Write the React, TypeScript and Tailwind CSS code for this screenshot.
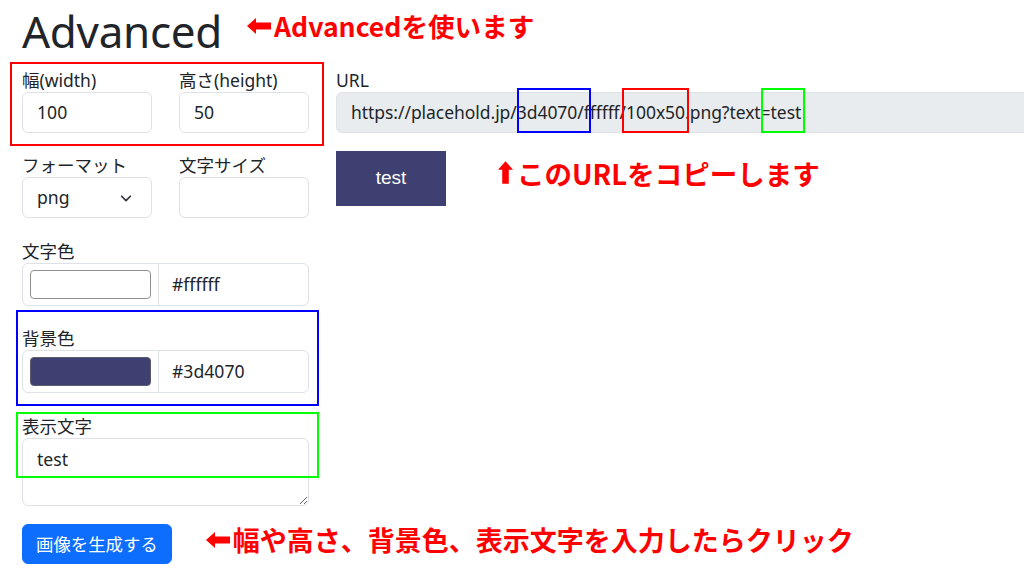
import React from "react";

const font = { fontFamily: '"Noto Sans", "Noto Sans CJK JP", sans-serif' };
const noteFont = { fontFamily: '"Noto Sans CJK JP", sans-serif' };

function LeftArrow({ className }: { className?: string }) {
  return (
    <svg viewBox="0 0 24 16" className={className} fill="#ff0000">
      <path d="M0 8 L9 0 L9 4.5 L24 4.5 L24 11.5 L9 11.5 L9 16 Z" />
    </svg>
  );
}

function UpArrow({ className }: { className?: string }) {
  return (
    <svg viewBox="0 0 16 24" className={className} fill="#ff0000">
      <path d="M8 0 L16 9 L11.5 9 L11.5 24 L4.5 24 L4.5 9 L0 9 Z" />
    </svg>
  );
}

function Label({ children }: { children: React.ReactNode }) {
  return <div className="text-[17.5px] leading-[20px] mb-[2px] text-[#212529]">{children}</div>;
}

function TextInput({ value }: { value: string }) {
  return (
    <div className="h-[41px] border border-[#dee2e6] rounded-[6px] bg-white flex items-center px-[14px] text-[17.6px] text-[#212529]">
      {value}
    </div>
  );
}

function ColorGroup({ swatch, value, light }: { swatch: string; value: string; light?: boolean }) {
  return (
    <div className="h-[43px] flex border border-[#dee2e6] rounded-[6px] bg-white">
      <div className="w-[136px] border-r border-[#dee2e6] flex items-center px-[7px]">
        <div
          className={`w-full h-[29px] rounded-[4px] border ${light ? "border-[#8f8f8f]" : "border-[#5a5a6a]"}`}
          style={{ backgroundColor: swatch }}
        />
      </div>
      <div className="flex items-center px-[13px] text-[17.6px] text-[#212529]">{value}</div>
    </div>
  );
}

export default function App() {
  return (
    <div className="relative w-[1024px] h-[576px] bg-white overflow-hidden text-[#212529]" style={font}>
      {/* header */}
      <div className="flex items-center h-[62px] pl-[22px]">
        <h1 className="text-[44px] leading-[54px] font-normal tracking-[-0.3px]">Advanced</h1>
        <div className="flex items-center ml-[25px] mb-[10px] text-[#ff0000] font-bold text-[26.6px]" style={noteFont}>
          <LeftArrow className="w-[24px] h-[16px] mr-[3px]" />
          <span>Advancedを使います</span>
        </div>
      </div>

      <div className="flex pl-[22px] pt-[8px]">
        {/* left column */}
        <div className="w-[287px] shrink-0 flex flex-col">
          <div className="grid grid-cols-2 gap-x-[27px]">
            <div>
              <Label>幅(width)</Label>
              <TextInput value="100" />
            </div>
            <div>
              <Label>高さ(height)</Label>
              <TextInput value="50" />
            </div>
          </div>

          <div className="grid grid-cols-2 gap-x-[27px] mt-[22px]">
            <div>
              <Label>フォーマット</Label>
              <div className="h-[41px] border border-[#dee2e6] rounded-[6px] bg-white flex items-center justify-between px-[14px] text-[17.6px]">
                <span>png</span>
                <svg viewBox="0 0 16 16" className="w-[14px] h-[14px] mr-[4px]" fill="none" stroke="#343a40" strokeWidth="2" strokeLinecap="round" strokeLinejoin="round">
                  <path d="M3 6 L8 11 L13 6" />
                </svg>
              </div>
            </div>
            <div>
              <Label>文字サイズ</Label>
              <TextInput value="" />
            </div>
          </div>

          <div className="mt-[23px]">
            <Label>文字色</Label>
            <ColorGroup swatch="#ffffff" value="#ffffff" light />
          </div>

          <div className="mt-[22px]">
            <Label>背景色</Label>
            <ColorGroup swatch="#3d4070" value="#3d4070" />
          </div>

          <div className="mt-[23px]">
            <Label>表示文字</Label>
            <textarea
              readOnly
              value="test"
              className="block w-full h-[68px] border border-[#dee2e6] rounded-[6px] bg-white px-[14px] py-[7px] text-[17.6px] leading-[26px] text-[#212529] outline-none"
              style={font}
            />
          </div>

          <div className="flex items-center h-[40px] mt-[18px]">
            <button className="shrink-0 whitespace-nowrap h-[40px] px-[13px] bg-[#0d6efd] text-white text-[17.4px] rounded-[6px] border border-[#0d6efd]" style={font}>
              画像を生成する
            </button>
            <div className="flex items-center ml-[34px] mb-[8px] text-[#ff0000] font-bold text-[27px] leading-[28px] whitespace-nowrap" style={noteFont}>
              <LeftArrow className="w-[24px] h-[16px] mr-[3px]" />
              <span>幅や高さ、背景色、表示文字を入力したらクリック</span>
            </div>
          </div>
        </div>

        {/* right column */}
        <div className="ml-[27px] flex flex-col">
          <div className="text-[17.5px] leading-[20px] mb-[2px]">URL</div>
          <div className="w-[720px] h-[41px] border border-[#dee2e6] rounded-[6px] bg-[#e9ecef] flex items-center px-[14px] text-[17.5px] whitespace-nowrap tracking-[-0.05px]">
            https://placehold.jp/3d4070/ffffff/100x50.png?text=test
          </div>
          <div className="flex items-center mt-[18px]">
            <div className="w-[110px] h-[55px] bg-[#3d4070] flex items-center justify-center text-white text-[19px]" style={{ fontFamily: '"Liberation Sans", Arial, sans-serif' }}>
              test
            </div>
            <div className="flex items-center ml-[52px] mb-[12px] text-[#ff0000] font-bold text-[27.5px] leading-[30px]" style={noteFont}>
              <UpArrow className="w-[15px] h-[23px] mr-[4px]" />
              <span>このURLをコピーします</span>
            </div>
          </div>
        </div>
      </div>

      {/* annotation frames */}
      <div className="absolute left-[10px] top-[62px] w-[314px] h-[84px] border-2 border-[#ff0000]" />
      <div className="absolute left-[16px] top-[310px] w-[303px] h-[96px] border-2 border-[#0000ff]" />
      <div className="absolute left-[16px] top-[412px] w-[303px] h-[66px] border-2 border-[#00ff00]" />
      <div className="absolute left-[517px] top-[88px] w-[74px] h-[45px] border-2 border-[#0000ff]" />
      <div className="absolute left-[622px] top-[88px] w-[67px] h-[45px] border-2 border-[#ff0000]" />
      <div className="absolute left-[761px] top-[88px] w-[44px] h-[45px] border-2 border-[#00ff00]" />
    </div>
  );
}
